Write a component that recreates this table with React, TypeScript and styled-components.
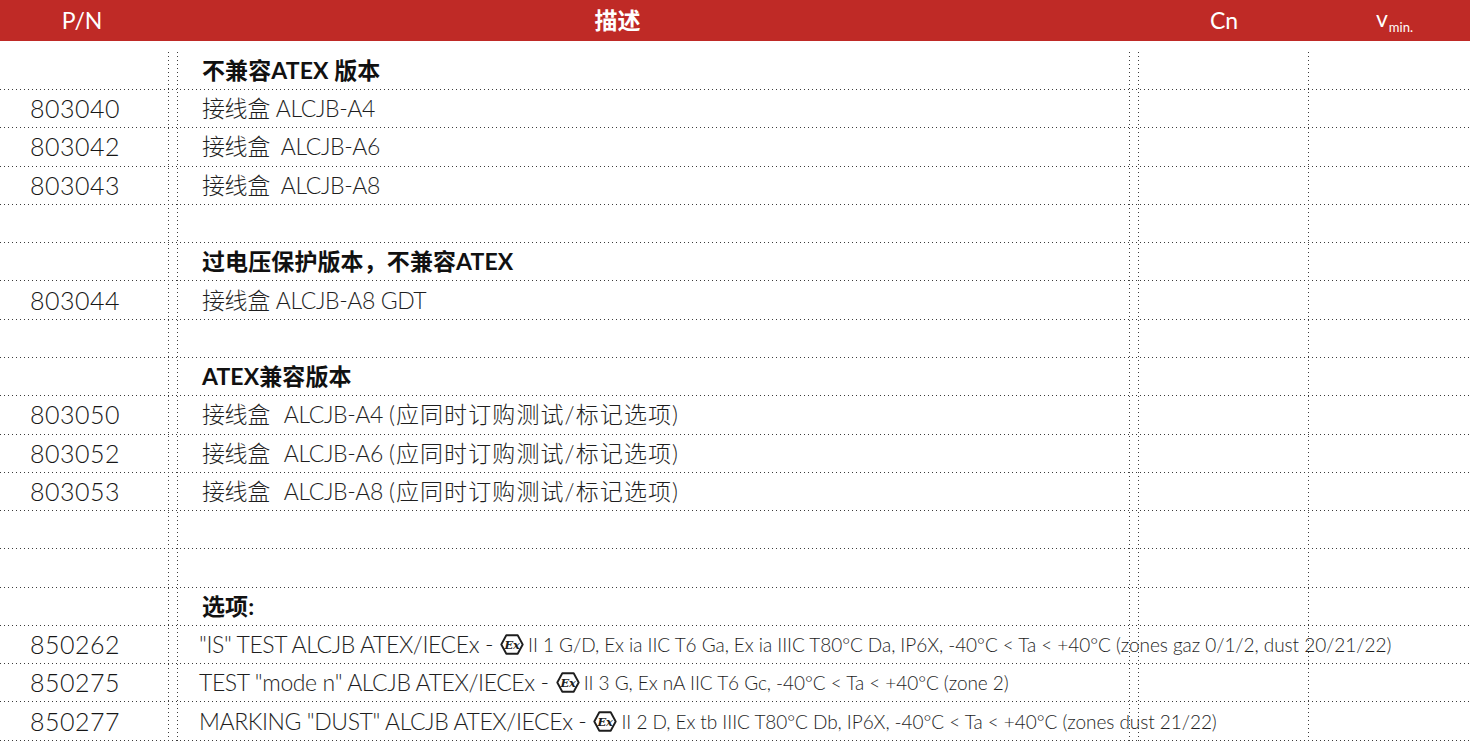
import React from "react";
import styled, { createGlobalStyle } from "styled-components";

const DOT = "#3c3c3c";

const GlobalStyle = createGlobalStyle`
  html, body {
    margin: 0;
    padding: 0;
    background: #ffffff;
    overflow: hidden;
  }
  body {
    font-family: "Lato", "Noto Sans CJK SC", sans-serif;
    color: #222;
  }
`;

const Page = styled.div`
  width: 1470px;
  height: 744px;
  display: flex;
  flex-direction: column;
  overflow: hidden;
`;

const HeaderBar = styled.div`
  flex-shrink: 0;
  height: 41px;
  background: #bf2a26;
  color: #ffffff;
  display: grid;
  grid-template-columns: 168px 10px 951px 10px 170px 1fr;
  align-items: center;
`;

const HeadCell = styled.div<{ $col: number; $padL?: number; $padR?: number; $bold?: boolean }>`
  grid-column: ${(p) => p.$col};
  text-align: center;
  font-size: 23px;
  font-weight: ${(p) => (p.$bold ? 700 : 400)};
  padding-left: ${(p) => p.$padL ?? 0}px;
  padding-right: ${(p) => p.$padR ?? 0}px;
  line-height: 1;
  white-space: nowrap;
`;

const Sub = styled.sub`
  font-size: 13px;
  vertical-align: -5px;
  margin-left: 1px;
`;

const Body = styled.div`
  flex: 1;
  margin-top: 10.7px;
  display: flex;
  flex-direction: column;
  background-image: linear-gradient(to bottom, ${DOT} 1px, transparent 1px),
    linear-gradient(to bottom, ${DOT} 1px, transparent 1px),
    linear-gradient(to bottom, ${DOT} 1px, transparent 1px),
    linear-gradient(to bottom, ${DOT} 1px, transparent 1px),
    linear-gradient(to bottom, ${DOT} 1px, transparent 1px);
  background-size: 1px 4px;
  background-repeat: repeat-y;
  background-position: 168px 0, 177px 0, 1129px 0, 1138px 0, 1308px 0;
`;

const Row = styled.div`
  flex-shrink: 0;
  height: 38.29px;
  box-sizing: border-box;
  padding-bottom: 1px;
  display: grid;
  grid-template-columns: 178px 951px 1fr;
  align-items: center;
  background-image: linear-gradient(to right, ${DOT} 1px, transparent 1px);
  background-size: 4px 1px;
  background-repeat: repeat-x;
  background-position: 0 100%;
`;

const PnCell = styled.div`
  padding-left: 30px;
  font-size: 25px;
  font-weight: 300;
  color: #161616;
  letter-spacing: 0.5px;
  line-height: 1;
`;

const DescCell = styled.div<{ $heading?: boolean; $padL?: number }>`
  padding-left: ${(p) => p.$padL ?? 24}px;
  font-size: 23px;
  font-weight: ${(p) => (p.$heading ? 700 : 300)};
  color: ${(p) => (p.$heading ? "#111" : "#1e1e1e")};
  white-space: nowrap;
  overflow: visible;
  line-height: 1;
  display: flex;
  align-items: center;
  letter-spacing: ${(p) => (p.$heading ? 0.1 : -0.4)}px;
`;

const Gap = styled.span<{ $w: number }>`
  display: inline-block;
  width: ${(p) => p.$w}px;
`;

const Extra = styled.span`
  letter-spacing: 1.1px;
`;

const SmallText = styled.span`
  font-size: 19px;
  font-weight: 300;
  letter-spacing: -0.05px;
  color: #1e1e1e;
  margin-left: 4px;
`;

const ExMark = styled.svg`
  width: 24px;
  height: 21px;
  margin-left: 7px;
  flex-shrink: 0;
`;

const ExSymbol = () => (
  <ExMark viewBox="0 0 24 21">
    <polygon
      points="6.3,1.3 17.7,1.3 22.7,10.5 17.7,19.7 6.3,19.7 1.3,10.5"
      fill="none"
      stroke="#1e1e1e"
      strokeWidth="1.9"
      strokeLinejoin="round"
    />
    <text
      x="12"
      y="14.8"
      textAnchor="middle"
      fontFamily="'DejaVu Serif', 'Liberation Serif', serif"
      fontStyle="italic"
      fontWeight="700"
      fontSize="11.5"
      fill="#1e1e1e"
    >
      Ex
    </text>
  </ExMark>
);

type RowData =
  | { kind: "heading"; text: string }
  | { kind: "empty" }
  | { kind: "item"; pn: string; name: string; model: string; gap: number; extra?: string }
  | { kind: "option"; pn: string; main: string; spec: string };

const rows: RowData[] = [
  { kind: "heading", text: "不兼容ATEX 版本" },
  { kind: "item", pn: "803040", name: "接线盒", model: "ALCJB-A4", gap: 6 },
  { kind: "item", pn: "803042", name: "接线盒", model: "ALCJB-A6", gap: 11 },
  { kind: "item", pn: "803043", name: "接线盒", model: "ALCJB-A8", gap: 11 },
  { kind: "empty" },
  { kind: "heading", text: "过电压保护版本，不兼容ATEX" },
  { kind: "item", pn: "803044", name: "接线盒", model: "ALCJB-A8 GDT", gap: 6 },
  { kind: "empty" },
  { kind: "heading", text: "ATEX兼容版本" },
  { kind: "item", pn: "803050", name: "接线盒", model: "ALCJB-A4", gap: 14, extra: "(应同时订购测试/标记选项)" },
  { kind: "item", pn: "803052", name: "接线盒", model: "ALCJB-A6", gap: 14, extra: "(应同时订购测试/标记选项)" },
  { kind: "item", pn: "803053", name: "接线盒", model: "ALCJB-A8", gap: 14, extra: "(应同时订购测试/标记选项)" },
  { kind: "empty" },
  { kind: "empty" },
  { kind: "heading", text: "选项:" },
  {
    kind: "option",
    pn: "850262",
    main: "\"IS\" TEST ALCJB ATEX/IECEx -",
    spec: "II 1 G/D, Ex ia IIC T6 Ga, Ex ia IIIC T80°C Da, IP6X, -40°C < Ta < +40°C (zones gaz 0/1/2, dust 20/21/22)",
  },
  {
    kind: "option",
    pn: "850275",
    main: "TEST \"mode n\" ALCJB ATEX/IECEx -",
    spec: "II 3 G, Ex nA IIC T6 Gc, -40°C < Ta < +40°C (zone 2)",
  },
  {
    kind: "option",
    pn: "850277",
    main: "MARKING \"DUST\" ALCJB ATEX/IECEx -",
    spec: "II 2 D, Ex tb IIIC T80°C Db, IP6X, -40°C < Ta < +40°C (zones dust 21/22)",
  },
];

const renderRow = (r: RowData, i: number) => {
  switch (r.kind) {
    case "heading":
      return (
        <Row key={i}>
          <PnCell />
          <DescCell $heading>{r.text}</DescCell>
        </Row>
      );
    case "empty":
      return <Row key={i} />;
    case "item":
      return (
        <Row key={i}>
          <PnCell>{r.pn}</PnCell>
          <DescCell>
            {r.name}
            <Gap $w={r.gap} />
            {r.model}
            {r.extra ? (
              <>
                <Gap $w={6} />
                <Extra>{r.extra}</Extra>
              </>
            ) : null}
          </DescCell>
        </Row>
      );
    case "option":
      return (
        <Row key={i}>
          <PnCell>{r.pn}</PnCell>
          <DescCell $padL={21}>
            {r.main}
            <ExSymbol />
            <SmallText>{r.spec}</SmallText>
          </DescCell>
        </Row>
      );
  }
};

export default function App() {
  return (
    <>
      <GlobalStyle />
      <Page>
        <HeaderBar>
          <HeadCell $col={1} $padR={4}>
            P/N
          </HeadCell>
          <HeadCell $col={3} $padR={72} $bold>
            描述
          </HeadCell>
          <HeadCell $col={5}>Cn</HeadCell>
          <HeadCell $col={6} $padL={10}>
            v<Sub>min.</Sub>
          </HeadCell>
        </HeaderBar>
        <Body>{rows.map(renderRow)}</Body>
      </Page>
    </>
  );
}
